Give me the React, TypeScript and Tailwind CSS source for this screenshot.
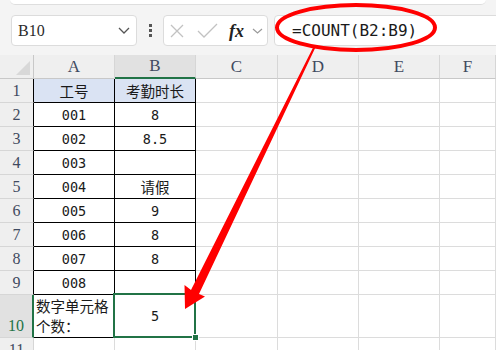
import React from 'react';

const serif = "font-['Liberation_Serif',serif]";
const mono = "font-['DejaVu_Sans_Mono','Noto_Sans_CJK_SC',monospace]";
const cjk = "font-['Noto_Sans_CJK_SC',sans-serif]";

type Row = { n: string; a: string; b: string };

const rows: Row[] = [
  { n: '1', a: '工号', b: '考勤时长' },
  { n: '2', a: '001', b: '8' },
  { n: '3', a: '002', b: '8.5' },
  { n: '4', a: '003', b: '' },
  { n: '5', a: '004', b: '请假' },
  { n: '6', a: '005', b: '9' },
  { n: '7', a: '006', b: '8' },
  { n: '8', a: '007', b: '8' },
  { n: '9', a: '008', b: '' },
];

const isCjk = (s: string) => /[\u4e00-\u9fff]/.test(s);

function Cell({ text, head }: { text: string; head?: boolean }) {
  return (
    <div
      className={`flex items-end justify-center pb-[2px] border-r border-b border-black text-[#1a1a1a] ${
        head ? 'bg-[#dae3f3]' : 'bg-white'
      } ${isCjk(text) ? `${cjk} text-[14.5px] leading-[19px]` : `${mono} text-[13.5px] leading-[18px]`}`}
    >
      {text}
    </div>
  );
}

function EmptyCell() {
  return <div className="border-r border-b border-[#dcdcdc] bg-white" />;
}

function Toolbar() {
  return (
    <div className="h-[55px] bg-[#f4f4f4]">
      <div className="mx-[10px] h-[5px] rounded-b-[6px] bg-white border-b border-[#dedede]" />
      <div className="flex items-center pt-[10px]">
        {/* name box */}
        <div className="ml-[11px] w-[126px] h-[31px] flex items-center justify-between bg-white border border-[#dcdcdc] rounded-[4px] pl-[6px] pr-[6px]">
          <span className={`${serif} text-[16px] text-[#2b2b2b]`}>B10</span>
          <svg width="12" height="7" viewBox="0 0 12 7">
            <polyline points="1,1 6,6 11,1" fill="none" stroke="#555" strokeWidth="1.3" />
          </svg>
        </div>
        {/* kebab */}
        <div className="w-[26px] flex flex-col items-center gap-[2px]">
          <div className="w-[3px] h-[3px] bg-[#555]" />
          <div className="w-[3px] h-[3px] bg-[#555]" />
          <div className="w-[3px] h-[3px] bg-[#555]" />
        </div>
        {/* cancel / enter / fx */}
        <div className="w-[105px] h-[31px] flex items-center bg-white border border-[#dcdcdc] rounded-[4px]">
          <svg className="ml-[6px]" width="14" height="14" viewBox="0 0 14 14">
            <path d="M1 1L13 13M13 1L1 13" stroke="#c2c2c2" strokeWidth="1.3" />
          </svg>
          <svg className="ml-[13px]" width="21" height="15" viewBox="0 0 21 15">
            <polyline points="1,8 7,14 20,1" fill="none" stroke="#c2c2c2" strokeWidth="1.3" />
          </svg>
          <span className={`ml-[11px] ${serif} italic font-bold text-[18px] leading-none text-[#222]`}>fx</span>
          <svg className="ml-[8px]" width="11" height="6" viewBox="0 0 11 6">
            <polyline points="1,1 5.5,5 10,1" fill="none" stroke="#9a9a9a" strokeWidth="1.2" />
          </svg>
        </div>
        {/* formula */}
        <div className="ml-[6px] flex-1 -mr-[6px] h-[31px] flex items-center bg-white border border-[#dcdcdc] rounded-[4px] pl-[17px]">
          <span className={`${mono} text-[16px] text-[#1a1a1a]`}>=COUNT(B2:B9)</span>
        </div>
      </div>
    </div>
  );
}

function Sheet() {
  const cols = ['A', 'B', 'C', 'D', 'E', 'F'];
  return (
    <div className="grid grid-cols-[34px_81px_81px_82px_81px_81px_1fr] grid-rows-[24px_repeat(9,24px)_43px_24px] bg-white">
      {/* corner */}
      <div className="bg-[#efefef] border-r border-b border-[#c8c8c8] flex items-end justify-end p-[2px]">
        <svg width="16" height="16" viewBox="0 0 16 16">
          <polygon points="15,1 15,15 1,15" fill="#d8d8d8" />
        </svg>
      </div>
      {cols.map((c) => (
        <div
          key={c}
          className={`flex items-center justify-center border-r border-[#d6d6d6] ${serif} text-[17px] text-[#3f4a60] ${
            c === 'B' ? 'bg-[#e1e1e1] border-b-2 border-b-[#217346]' : 'bg-[#efefef] border-b border-b-[#c8c8c8]'
          }`}
        >
          {c}
        </div>
      ))}

      {rows.map((r) => (
        <React.Fragment key={r.n}>
          <div
            className={`flex items-end justify-center pb-[2px] leading-[18px] bg-[#efefef] border-b border-[#d6d6d6] border-r border-r-black ${serif} text-[16px] text-[#3f4a60]`}
          >
            {r.n}
          </div>
          <Cell text={r.a} head={r.n === '1'} />
          <Cell text={r.b} head={r.n === '1'} />
          <EmptyCell />
          <EmptyCell />
          <EmptyCell />
          <EmptyCell />
        </React.Fragment>
      ))}

      {/* row 10 */}
      <div
        className={`flex items-end justify-center pb-[2px] leading-[18px] bg-[#e1e1e1] border-b border-[#d6d6d6] border-r-2 border-r-[#217346] ${serif} text-[16px] text-[#217346]`}
      >
        10
      </div>
      <div className={`flex items-end pl-[2px] pb-[1px] border-r border-b border-black ${cjk} text-[14.5px] leading-[20px] text-[#1a1a1a]`}>
        数字单元格个数：
      </div>
      <div className={`relative flex items-center justify-center border-r border-b border-black ${mono} text-[13.5px] text-[#1a1a1a]`}>
        5
        <div className="absolute -left-[2px] -top-[2px] -right-[1px] -bottom-[1px] border-2 border-[#217346]" />
        <div className="absolute -right-[4px] -bottom-[4px] w-[7px] h-[7px] bg-[#217346] border border-white" />
      </div>
      <EmptyCell />
      <EmptyCell />
      <EmptyCell />
      <EmptyCell />

      {/* row 11 */}
      <div className={`flex items-start justify-center pt-[3px] leading-[18px] bg-[#efefef] border-r border-[#d6d6d6] ${serif} text-[16px] text-[#3f4a60]`}>
        11
      </div>
      {cols.map((c) => (
        <div key={c} className="border-r border-[#dcdcdc] bg-white" />
      ))}
    </div>
  );
}

export default function App() {
  return (
    <div className="relative w-[496px] h-[350px] overflow-hidden bg-white">
      <Toolbar />
      <Sheet />

      {/* annotation: ellipse and arrow */}
      <svg className="absolute left-0 top-0 pointer-events-none" width="496" height="350" viewBox="0 0 496 350">
        <ellipse cx="356" cy="27.5" rx="79" ry="22.5" fill="none" stroke="#ff0000" strokeWidth="4" />
        <polygon
          points="313.6,46.6 315.4,47.4 199,294 205,296.5 185,309 184.5,285 191,290"
          fill="#ff0000"
        />
      </svg>
    </div>
  );
}
